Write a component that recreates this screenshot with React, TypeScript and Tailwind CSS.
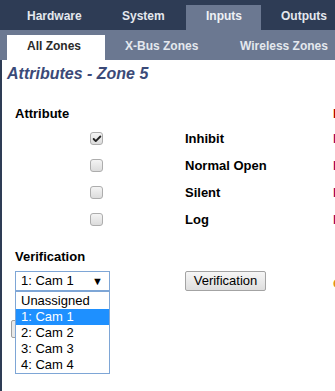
import { Check } from 'lucide-react';

const topTabs = [
  { label: 'Hardware', w: 'w-[95px]' },
  { label: 'System', w: 'w-[84px]' },
  { label: 'Inputs', w: 'w-[75px]' },
  { label: 'Outputs', w: 'w-[90px]' },
];
const subTabs = [
  { label: 'All Zones', w: 'w-[98px]' },
  { label: 'X-Bus Zones', w: 'w-[115px]' },
  { label: 'Wireless Zones', w: 'w-[130px]' },
];
const attributes = [
  { label: 'Inhibit', checked: true },
  { label: 'Normal Open', checked: false },
  { label: 'Silent', checked: false },
  { label: 'Log', checked: false },
];
const cams = ['Unassigned', '1: Cam 1', '2: Cam 2', '3: Cam 3', '4: Cam 4'];

function Box({ checked }: { checked: boolean }) {
  return (
    <div className="w-[13px] h-[13px] shrink-0 rounded-[3px] border border-[#adadad] bg-gradient-to-b from-[#f4f4f4] to-[#dcdcdc] flex items-center justify-center">
      {checked && <Check className="w-[10px] h-[10px] text-[#222]" strokeWidth={4.5} />}
    </div>
  );
}

export default function App() {
  return (
    <div className="w-[335px] h-[391px] overflow-hidden bg-white font-['Liberation_Sans',Arial,sans-serif] text-[13px]">
      {/* Main nav */}
      <div className="h-[30px] bg-[#2e3c55] flex items-end pl-[7px] whitespace-nowrap">
        {topTabs.map((t) => (
          <div
            key={t.label}
            className={
              t.label === 'Inputs'
                ? `${t.w} shrink-0 h-[25px] pl-5 pt-[4px] text-[12px] leading-[15px] font-bold text-[#eef1f5] bg-[#6b7891]`
                : `${t.w} shrink-0 h-[25px] pl-5 pt-[4px] text-[12px] leading-[15px] font-bold text-[#e4e8ee]`
            }
          >
            {t.label}
          </div>
        ))}
      </div>

      {/* Sub nav */}
      <div className="h-[30px] bg-[#6b7891] flex items-end pl-[7px] whitespace-nowrap">
        {subTabs.map((t) => (
          <div
            key={t.label}
            className={
              t.label === 'All Zones'
                ? `${t.w} shrink-0 h-[25px] pl-5 pt-[4px] text-[12px] leading-[15px] font-bold text-[#2a2a2a] bg-white`
                : `${t.w} shrink-0 h-[25px] pl-5 pt-[4px] text-[12px] leading-[15px] font-bold text-[#e4e8ee]`
            }
          >
            {t.label}
          </div>
        ))}
      </div>

      {/* Content */}
      <div className="h-[331px] border-l-2 border-[#2e3c55] relative whitespace-nowrap">
        <div className="pl-[5px] pt-[4px] text-[16px] font-bold italic text-[#3b4a78] leading-[20px]">
          Attributes - Zone 5
        </div>

        <div className="mt-[22px] flex items-center h-[16px] pl-[13px]">
          <span className="shrink-0 font-bold text-black w-[318px]">Attribute</span>
          <span className="shrink-0 font-bold text-[#b00000]">Description</span>
        </div>

        <div className="mt-[3px] flex flex-col">
          {attributes.map((a) => (
            <div key={a.label} className="h-[27px] flex items-center">
              <div className="w-[88px] shrink-0" />
              <Box checked={a.checked} />
              <span className="shrink-0 ml-[82px] w-[148px] font-bold text-black">{a.label}</span>
              <span className="shrink-0 font-bold text-[#a0005a]">Enabled</span>
            </div>
          ))}
        </div>

        <div className="mt-[16px] pl-[13px] font-bold text-black leading-[16px]">Verification</div>

        <div className="mt-[6px] pl-[13px] flex items-start">
          <div className="relative w-[95px] shrink-0">
            <div className="h-[20px] border border-[#7ea6d6] bg-white flex items-center justify-between pl-[5px] pr-[6px] text-black">
              <span>1: Cam 1</span>
              <span className="text-[11px] leading-none">▼</span>
            </div>
            {/* button hidden behind the open list */}
            <div className="absolute left-[-4px] top-[49px] w-[60px] h-[18px] border border-[#a0a0a0] rounded-[2px] bg-[#e8e8e8]" />
            <div className="absolute left-0 top-[20px] w-[95px] border border-[#7ea6d6] bg-white z-10 pt-[1px]">
              {cams.map((c) => (
                <div
                  key={c}
                  className={
                    c === '1: Cam 1'
                      ? 'h-[16px] leading-[16px] pl-[5px] bg-[#1e90ff] text-white'
                      : 'h-[16px] leading-[16px] pl-[5px] text-black'
                  }
                >
                  {c}
                </div>
              ))}
            </div>
          </div>
          <button className="shrink-0 ml-[75px] w-[81px] h-[20px] border border-[#a3a3a3] rounded-[2px] bg-gradient-to-b from-[#f6f6f6] to-[#dedede] text-black leading-[18px]">
            Verification
          </button>
          <span className="shrink-0 ml-[67px] mt-[3px] text-[#e0901a] font-bold">Off</span>
        </div>
      </div>
    </div>
  );
}
